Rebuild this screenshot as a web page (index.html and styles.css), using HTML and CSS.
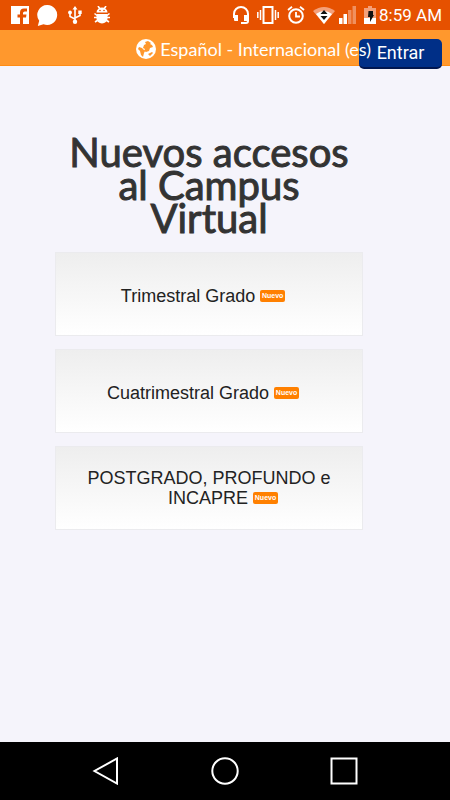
FILE: index.html
```html
<!DOCTYPE html>
<html lang="es">
<head>
<meta charset="utf-8">
<meta name="viewport" content="width=device-width, initial-scale=1">
<title>Campus Virtual</title>
<link rel="stylesheet" href="styles.css">
</head>
<body>
<div class="status">
  <div class="status-left">
    <svg width="18" height="18" viewBox="0 0 18 18"><path fill="#fff" d="M0 0h18v18H0z"/><path fill="#e65100" d="M9 18v-6.500H6.500V8.500H9V6.500q0-4 4-4h3v3h-2.200Q12 5.500 12 7v1.500h3.500l-.5 3h-3V18z"/></svg>
    <svg width="21" height="21" viewBox="0 0 21 21"><path fill="#fff" d="M10.500 0a10 10 0 1 1-4 19.300L.8 21l1.400-5.200A10 10 0 0 1 10.500 0z"/></svg>
    <svg class="usb" width="14" height="18" viewBox="0 0 14 18"><path fill="none" stroke="#fff" stroke-width="1.600" d="M7 2v14M2 6v4.500L7 13M12 6v3.500L7 12"/><path fill="#fff" d="M7 0l2.500 3.500h-5zM10.300 4.500h3.400V8h-3.400z"/><circle cx="2" cy="6.500" r="1.900" fill="#fff"/><circle cx="7" cy="15.800" r="2.200" fill="#fff"/></svg>
    <svg class="bug" width="16" height="18" viewBox="0 0 16 18"><path fill="#fff" d="M2.500 6.500a5.500 5 0 0 1 11 0zM2.500 8h11v4.500a5.500 5 0 0 1-11 0z"/><path stroke="#fff" stroke-width="1.600" fill="none" d="M4 0l2 3M12 0l-2 3M.5 7.500L3 9.500M15.500 7.500L13 9.500M0 11.500h16M1 16l3-2M15 16l-3-2"/><circle cx="6" cy="4.500" r=".8" fill="#e65100"/><circle cx="10" cy="4.500" r=".8" fill="#e65100"/></svg>
  </div>
  <div class="status-right">
    <svg width="16" height="18" viewBox="0 0 16 18"><path fill="none" stroke="#fff" stroke-width="2" d="M1 12V8a7 7 0 0 1 14 0v7q0 2-2 2H8"/><path fill="#fff" d="M1 9h4v6H2q-1 0-1-1zM11 9h4v6h-4z"/></svg>
    <svg width="22" height="18" viewBox="0 0 22 18"><path fill="none" stroke="#fff" stroke-width="2" d="M6.500 1h9v16h-9z"/><path stroke="#fff" stroke-width="1.500" d="M3.500 4v10M.8 6v6M18.500 4v10M21.200 6v6"/></svg>
    <svg width="18" height="18" viewBox="0 0 18 18"><circle cx="9" cy="10" r="6.800" fill="none" stroke="#fff" stroke-width="2"/><path fill="none" stroke="#fff" stroke-width="1.800" d="M9 6v4.500h4M1 4l4-3.300M17 4l-4-3.300"/></svg>
    <svg class="wifi" width="22" height="17" viewBox="0 0 22 17"><path fill="#f4a07a" d="M0 4Q11-4 22 4L11 17z"/><path fill="#fff" d="M3 7Q11 1 19 7l-8 10z"/><path fill="#111" d="M11 3l3.500 4h-7zM11 13L7.500 9h7z"/></svg>
    <svg width="17" height="18" viewBox="0 0 17 18"><path fill="#fff" d="M0 12h3.500v6H0zM4.500 8H8v10H4.500z"/><path fill="#f0905f" d="M9 4h3.500v14H9zM13.500 0H17v18h-3.500z"/></svg>
    <svg class="battery" width="12" height="18" viewBox="0 0 12 18"><path fill="#f4a07a" d="M4 0h4v2h4v10H0V2h4z"/><path fill="#fff" d="M0 12h12v6H0z"/><path fill="#111" d="M4.500 5H9v4h1l-4 7v-5H4z"/></svg>
    <span>8:59 AM</span>
  </div>
</div>
<header class="topbar">
  <a class="lang" href="#">
    <svg width="20" height="20" viewBox="0 0 20 20"><circle cx="10" cy="10" r="10" fill="#fff"/><path fill="#ff982d" d="M9 3l3-1 3 2-1 1 2 1 1 2-3 1-1 3-3 1-2-1 1-2-2-1 1-3 2-1zM3 8l3 1 3 3-1 2-1 4-2-2-1-4-2-2zM12 15l4-2 1 1-3 3z"/></svg>
    <span>Español - Internacional (es)</span>
  </a>
  <button class="login" type="button">Entrar</button>
</header>
<main class="content">
  <h1>Nuevos accesos al Campus Virtual</h1>
  <nav class="access" aria-label="Accesos">
    <a class="card" href="#"><span>Trimestral Grado</span><b class="badge">Nuevo</b></a>
    <a class="card" href="#"><span>Cuatrimestral Grado</span><b class="badge">Nuevo</b></a>
    <a class="card card-tall" href="#"><span>POSTGRADO, PROFUNDO e</span><span class="second-line">INCAPRE<b class="badge">Nuevo</b></span></a>
  </nav>
</main>
<footer class="navbar">
  <button type="button" aria-label="Atrás"><svg width="28" height="28" viewBox="0 0 28 28"><path d="M25 1.500v25L2.500 14z"/></svg></button>
  <button type="button" aria-label="Inicio"><svg width="28" height="28" viewBox="0 0 28 28"><circle cx="14" cy="14" r="12.700"/></svg></button>
  <button type="button" aria-label="Recientes"><svg width="28" height="28" viewBox="0 0 28 28"><path d="M1.500 1.500h25v25h-25z"/></svg></button>
</footer>
</body>
</html>
```
FILE: styles.css
```css
* { box-sizing: border-box; }

body {
  margin: 0;
  min-height: 100vh;
  display: flex;
  flex-direction: column;
  background: #f5f4fb;
  color: #333;
  font-family: Lato, sans-serif;
}

svg { display: block; flex: none; }
button { border: 0; padding: 0; font: inherit; }
a { color: inherit; text-decoration: none; }

.status {
  height: 30px;
  padding: 0 8px 0 11px;
  display: flex;
  align-items: center;
  justify-content: space-between;
  background: #e65100;
  color: #fff;
  font: 17px/30px Roboto, sans-serif;
}

.status-left,
.status-right { display: flex; align-items: center; }
.status-left { gap: 8px; }
.status-right { gap: 8px; }
.usb { margin-left: 2px; }
.bug { margin-left: 4px; }
.wifi { margin-right: -4px; }
.battery { margin-right: -5px; }

.topbar {
  height: 36px;
  padding-right: 8px;
  display: flex;
  align-items: flex-start;
  justify-content: flex-end;
  background: #ff982d;
  border-bottom: 1px solid #ff8c14;
}

.lang {
  z-index: 1;
  display: flex;
  align-items: center;
  gap: 4px;
  height: 38px;
  margin-right: -12px;
  color: #fff;
  font-size: 18px;
  white-space: nowrap;
}

.login {
  flex: none;
  width: 83px;
  height: 30px;
  margin-top: 9px;
  border-bottom: 2px solid #001650;
  border-radius: 5px;
  background: #002f87;
  color: #fff;
  font: 18px/28px Roboto, sans-serif;
}

.content {
  flex: 1;
  padding: 70px 87px 24px 55px;
}

h1 {
  margin: 0 0 17px;
  padding: 0 12px;
  font-size: 40px;
  line-height: 33px;
  font-weight: 400;
  text-align: center;
  -webkit-text-stroke: 1px #333;
}

.access {
  display: flex;
  flex-direction: column;
  gap: 13px;
}

.card {
  min-height: 84px;
  padding: 4px 24px 0 12px;
  display: flex;
  align-items: center;
  justify-content: center;
  gap: 5px;
  border: 1px solid #ebebee;
  background: linear-gradient(#eee, #fff);
  color: #222;
  font: 18px/20px "Liberation Sans", sans-serif;
}

.card-tall {
  flex-direction: column;
  gap: 0;
  padding: 0 12px;
}

.second-line {
  display: flex;
  align-items: center;
  gap: 5px;
  padding-left: 28px;
}

.badge {
  width: 25px;
  border-radius: 2px;
  background: #ff8000;
  color: #fff;
  font-size: 7px;
  line-height: 12px;
  text-align: center;
}

.navbar {
  height: 58px;
  padding: 0 46px;
  display: flex;
  align-items: center;
  justify-content: space-between;
  background: #000;
}

.navbar button {
  width: 120px;
  height: 58px;
  display: flex;
  align-items: center;
  justify-content: center;
  background: none;
}

.navbar svg {
  fill: none;
  stroke: #fff;
  stroke-width: 2;
}
```
